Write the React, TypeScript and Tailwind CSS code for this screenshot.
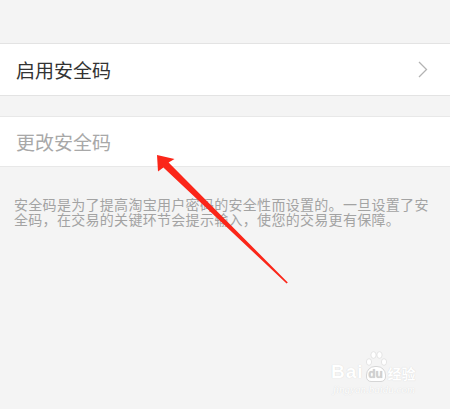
import React from "react";

const cjk = { fontFamily: '"Noto Sans CJK SC", "Noto Sans", sans-serif' };

function Chevron() {
  return (
    <svg width="10" height="17" viewBox="0 0 10 17" fill="none">
      <path d="M1 1L8.5 8.5L1 16" stroke="#b3b3b3" strokeWidth="1.3" />
    </svg>
  );
}

function Arrow() {
  return (
    <svg className="absolute left-0 top-0 pointer-events-none" width="450" height="409" viewBox="0 0 450 409">
      <polygon
        points="157,155 174.5,159 168.6,162.6 287.8,282.4 286.6,283.6 163.4,167.6 158,171.5"
        fill="#fb2619"
      />
    </svg>
  );
}

function Watermark() {
  return (
    <div className="absolute left-[331px] top-[350px] flex flex-col items-start select-none text-white [text-shadow:0_0_1px_#cfcfcf]">
      <div className="flex items-end">
        <span className="text-[19px] font-bold leading-[20px] tracking-[1px]" style={{ fontFamily: '"Liberation Sans", sans-serif' }}>
          Bai
        </span>
        <div className="relative w-[22px] h-[32px] mx-[1px]">
          <svg className="absolute left-0 top-0" width="22" height="20" viewBox="0 0 22 20">
            <ellipse cx="4" cy="12" rx="2.6" ry="3.3" fill="#fff" stroke="#d6d6d6" strokeWidth="0.6" />
            <ellipse cx="8.5" cy="5" rx="2.6" ry="3.3" fill="#fff" stroke="#d6d6d6" strokeWidth="0.6" />
            <ellipse cx="14.5" cy="5" rx="2.6" ry="3.3" fill="#fff" stroke="#d6d6d6" strokeWidth="0.6" />
            <ellipse cx="19" cy="12" rx="2.6" ry="3.3" fill="#fff" stroke="#d6d6d6" strokeWidth="0.6" />
          </svg>
          <div className="absolute left-[1px] top-[16px] w-[20px] h-[16px] rounded-t-[9px] rounded-b-[5px] bg-white border border-[#d6d6d6] flex items-center justify-center text-[#d0d0d0] text-[12px] font-bold leading-none" style={{ fontFamily: '"Liberation Sans", sans-serif' }}>
            du
          </div>
        </div>
        <span className="text-[14px] font-bold leading-[18px]" style={cjk}>
          经验
        </span>
      </div>
      <span className="text-[11px] italic leading-[13px] mt-[1px] ml-[2px]" style={{ fontFamily: '"Liberation Serif", serif' }}>
        jingyan.baidu.com
      </span>
    </div>
  );
}

export default function App() {
  return (
    <div className="relative w-[450px] h-[409px] overflow-hidden bg-[#f4f4f4]" style={cjk}>
      <div className="h-[43px]" />
      <div className="h-[53px] bg-white border-y border-[#e3e3e3] flex items-center justify-between pl-4 pr-[22px]">
        <span className="text-[19px] leading-none text-[#333333]">启用安全码</span>
        <Chevron />
      </div>
      <div className="h-[20px]" />
      <div className="h-[51px] bg-white border-y border-[#e8e8e8] flex items-center pl-4">
        <span className="text-[19px] leading-none text-[#a8a8a8]">更改安全码</span>
      </div>
      <p className="mt-[30px] px-[14px] text-[14px] leading-[15px] tracking-[0.3px] text-[#a3a3a3]">
        安全码是为了提高淘宝用户密码的安全性而设置的。一旦设置了安全码，在交易的关键环节会提示输入，使您的交易更有保障。
      </p>
      <Watermark />
      <Arrow />
    </div>
  );
}
